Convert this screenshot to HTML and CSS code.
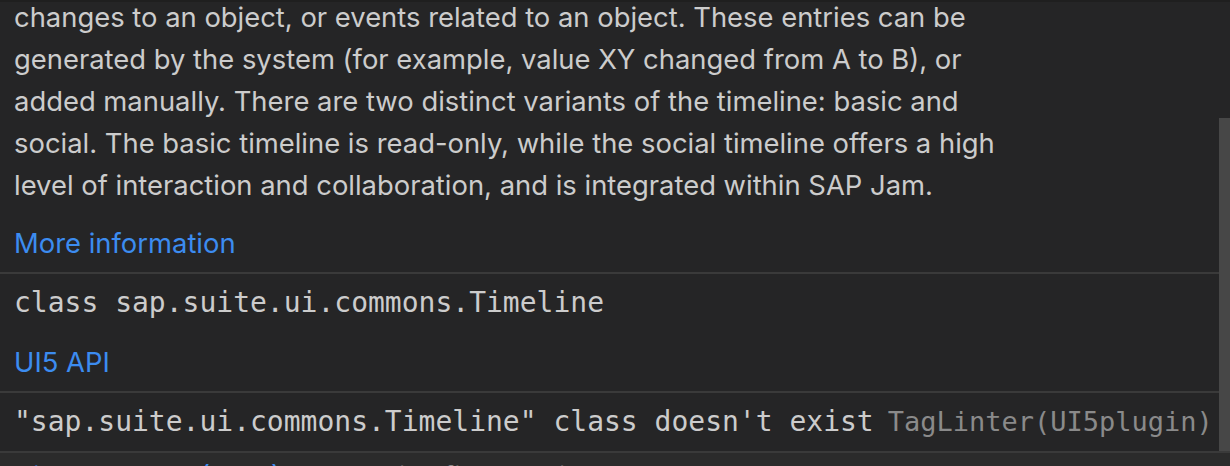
FILE: index.html
```html
<!DOCTYPE html>
<html>
<head>
<meta charset="utf-8">
<link rel="stylesheet" href="styles.css">
</head>
<body>
<div class="hover">
  <div class="scroll">
    <div class="content">
      <div class="row doc">
        <p class="para">changes to an object, or events related to an object. These entries can be generated by the system (for example, value XY changed from A to B), or added manually. There are two distinct variants of the timeline: basic and social. The basic timeline is read-only, while the social timeline offers a high level of interaction and collaboration, and is integrated within SAP Jam.</p>
        <p class="link">More information</p>
      </div>
      <div class="row sig">
        <pre class="code">class sap.suite.ui.commons.Timeline</pre>
        <p class="link">UI5 API</p>
      </div>
      <div class="row diag">
        <pre class="code">"sap.suite.ui.commons.Timeline" class doesn't exist<span class="source">TagLinter(UI5plugin)</span></pre>
      </div>
    </div>
    <div class="scrollbar"><div class="thumb"></div></div>
  </div>
  <div class="status">
    <span class="action">View Problem (⌥F8)</span>
    <span class="nofix">No quick fixes available</span>
  </div>
</div>
</body>
</html>
```

FILE: styles.css
```css
html, body {
  margin: 0;
  padding: 0;
  background: #252526;
}

.hover {
  width: 1230px;
  height: 466px;
  overflow: hidden;
  background: #252526;
  border-top: 2px solid #1f1f1f;
  box-sizing: border-box;
  display: flex;
  flex-direction: column;
  color: #cccccc;
  font-family: "Inter", "Noto Sans", sans-serif;
  font-size: 27.4px;
}

.scroll {
  position: relative;
  height: 449px;
  flex: none;
  overflow: hidden;
  display: flex;
}

.content {
  flex: 1;
  margin-top: -14px;
}

.row {
  padding: 8px 14px;
  border-bottom: 2px solid #3a3a3a;
}

.row:last-child {
  border-bottom: none;
}

.para {
  margin: 0 0 16px;
  line-height: 42px;
  width: 1005px;
}

.link {
  margin: 0;
  line-height: 42px;
  color: #3c8cf0;
}

.code {
  margin: 0;
  font-family: "DejaVu Sans Mono", "Liberation Mono", monospace;
  font-size: 28px;
  line-height: 42px;
  white-space: pre;
}

.sig .code {
  margin-bottom: 17px;
}

.source {
  margin-left: 14px;
  font-size: 27px;
  color: #8a8a8a;
}

.scrollbar {
  position: absolute;
  top: 116px;
  right: 0;
  width: 11px;
  bottom: 0;
}

.thumb {
  width: 100%;
  height: 100%;
  background: #474747;
}

.status {
  flex: 1;
  border-top: 2px solid #3a3a3a;
  background: #2b2b2b;
  padding: 2px 14px 0;
  display: flex;
  gap: 40px;
  line-height: 42px;
  white-space: nowrap;
}

.status .action {
  color: #3c8cf0;
}

.status .nofix {
  color: #8a8a8a;
}
```
